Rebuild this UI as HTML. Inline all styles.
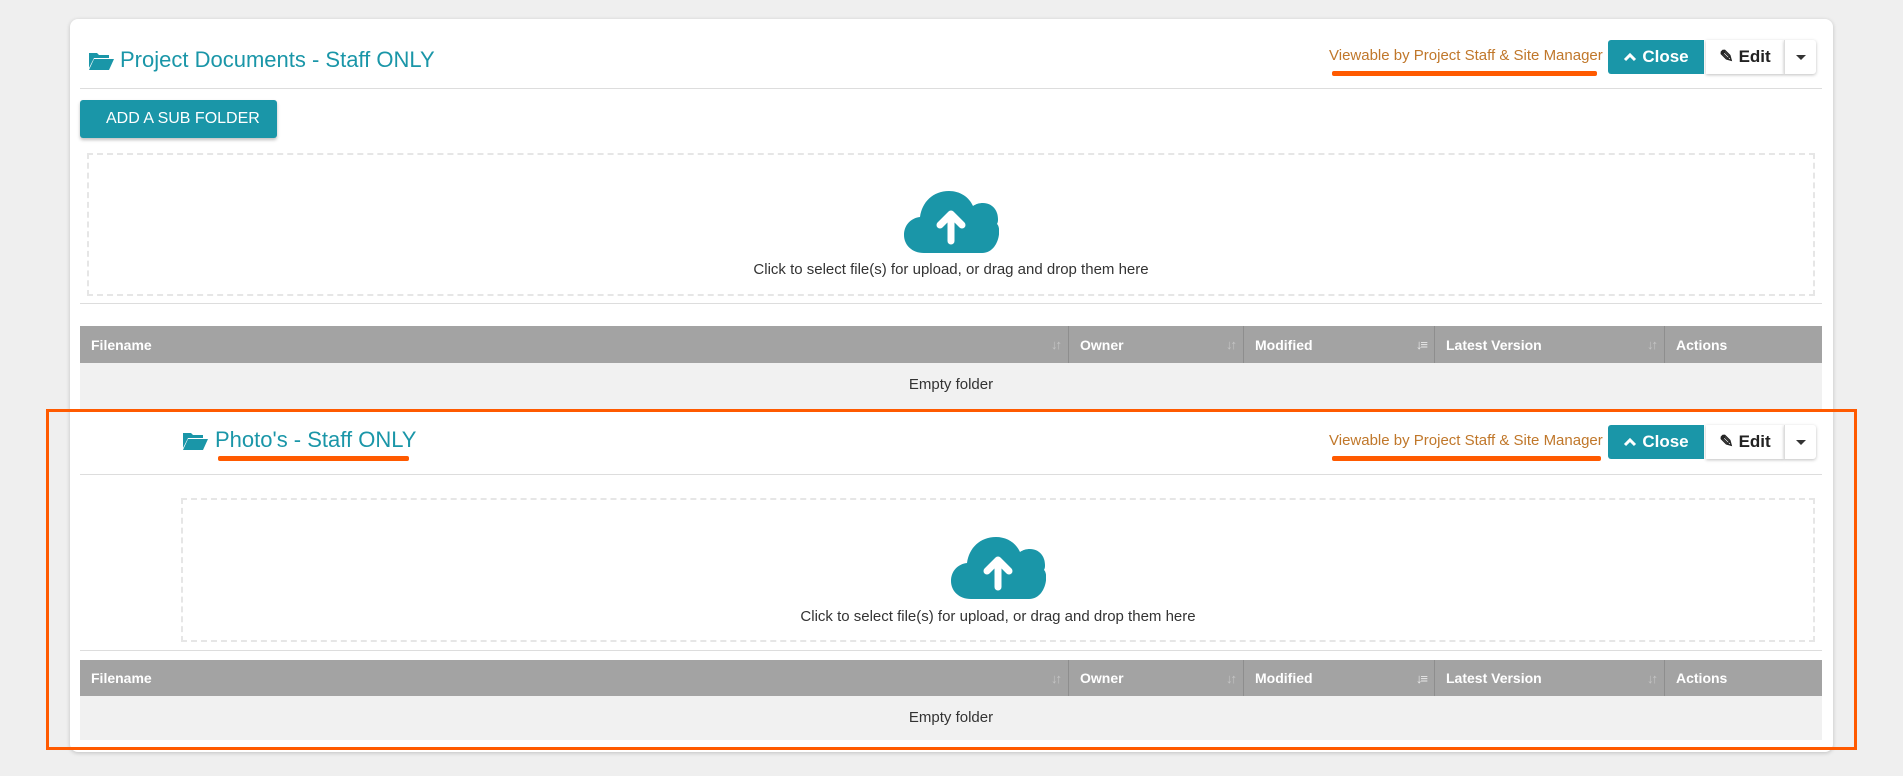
<!DOCTYPE html>
<html><head><meta charset="utf-8"><style>
*{box-sizing:border-box;margin:0;padding:0}
body{width:1903px;height:776px;background:#efefef;font-family:"Liberation Sans",sans-serif;position:relative;overflow:hidden}
.abs{position:absolute}
.card{left:70px;top:19px;width:1763px;height:733px;background:#fff;border-radius:8px;box-shadow:0 1px 4px rgba(0,0,0,.2)}
.title{color:#1a96a8;font-size:22px;white-space:nowrap}
.hr{height:1px;background:#ddd}
.btn{background:#1a96a8;color:#fff;border-radius:3px;box-shadow:0 2px 3px rgba(0,0,0,.25)}
.view{color:#c0772a;font-size:15px;white-space:nowrap}
.ul{background:#ff5a00;height:5px;border-radius:2px}
.close{background:#1a96a8;color:#fff;font-weight:bold;font-size:17px;border-radius:3px 0 0 3px;display:flex;align-items:center;justify-content:center;gap:5px}
.edit{background:#fff;color:#222;font-weight:bold;font-size:17px;display:flex;align-items:center;justify-content:center;gap:5px;box-shadow:0 1px 3px rgba(0,0,0,.25)}
.caret{background:#fff;border-left:1px solid #ddd;border-radius:0 3px 3px 0;box-shadow:0 1px 3px rgba(0,0,0,.25)}
.caret:after{content:"";position:absolute;left:11px;top:15px;border:5px solid transparent;border-top-color:#333;border-bottom:0}
.dz{border:2px dashed #e6e6e6}
.dtext{font-size:15px;color:#333;white-space:nowrap;transform:translateX(-50%)}
.th{background:#a3a3a3;color:#fff;font-weight:bold;font-size:14px}
.th div{position:absolute;top:0;height:100%;display:flex;align-items:center;padding-left:11px;border-left:1px solid #8e8e8e}
.sort{position:absolute;right:8px;color:#c5c5c5;font-size:13px;letter-spacing:-2px}
.er{background:#f1f1f1;font-size:15px;color:#333;text-align:center}
</style></head><body>
<div class="abs card"></div>

<svg class="abs" style="left:88px;top:50px" width="26" height="21" viewBox="0 0 26 21"><path d="M1 3h8l2 2h10v3H6L1 18z" fill="#1a96a8"/><path d="M6 9h20l-5 11H1z" fill="#1a96a8"/></svg>
<div class="abs title" style="left:120px;top:47px">Project Documents - Staff ONLY</div>
<div class="abs view" style="left:1329px;top:47px">Viewable by Project Staff &amp; Site Manager</div>
<div class="abs ul" style="left:1332px;top:71px;width:265px"></div>
<div class="abs close" style="left:1608px;top:40px;width:96px;height:34px"><svg width="14" height="10" viewBox="0 0 14 10"><path d="M2 8l5-5 5 5" stroke="#fff" stroke-width="3" fill="none"/></svg>Close</div>
<div class="abs edit" style="left:1706px;top:40px;width:78px;height:34px"><span>&#9998;</span>Edit</div>
<div class="abs caret" style="left:1784px;top:40px;width:32px;height:34px"></div>
<div class="abs hr" style="left:80px;top:88px;width:1742px"></div>
<div class="abs btn" style="left:80px;top:100px;width:197px;height:38px;font-size:16px;display:flex;align-items:center;padding-left:26px">ADD A SUB FOLDER</div>
<div class="abs dz" style="left:87px;top:153px;width:1728px;height:143px"></div>
<svg class="abs" style="left:904px;top:191px" width="95" height="62" viewBox="0 0 95 62"><path d="M20 62C8 62 0 54 0 44c0-10 7-17 16-18C18 11 29 0 45 0c11 0 20 6 24 15 3-2 6-3 10-3 9 0 15 7 15 16 0 2 0 3-1 5C98 37 95 62 78 62z" fill="#1a96a8"/><path d="M47 50V24M36 34l11-11 11 11" stroke="#fff" stroke-width="7" fill="none" stroke-linecap="round" stroke-linejoin="round"/></svg>
<div class="abs dtext" style="left:951px;top:261px">Click to select file(s) for upload, or drag and drop them here</div>
<div class="abs hr" style="left:80px;top:303px;width:1742px"></div>
<div class="abs th" style="left:80px;top:326px;width:1742px;height:37px">
<div style="left:0;width:988px;border:0">Filename<span class="sort">↓↑</span></div>
<div style="left:988px;width:175px">Owner<span class="sort">↓↑</span></div>
<div style="left:1163px;width:191px">Modified<span class="sort" style="color:#e8e8e8">↓≡</span></div>
<div style="left:1354px;width:230px">Latest Version<span class="sort">↓↑</span></div>
<div style="left:1584px;width:158px">Actions</div>
</div>
<div class="abs er" style="left:80px;top:363px;width:1742px;height:46px;line-height:44px">Empty folder</div>

<div class="abs" style="left:46px;top:409px;width:1811px;height:341px;border:3px solid #ff5a00"></div>
<svg class="abs" style="left:182px;top:430px" width="26" height="21" viewBox="0 0 26 21"><path d="M1 3h8l2 2h10v3H6L1 18z" fill="#1a96a8"/><path d="M6 9h20l-5 11H1z" fill="#1a96a8"/></svg>
<div class="abs title" style="left:215px;top:427px">Photo's - Staff ONLY</div>
<div class="abs ul" style="left:218px;top:456px;width:191px"></div>
<div class="abs view" style="left:1329px;top:432px">Viewable by Project Staff &amp; Site Manager</div>
<div class="abs ul" style="left:1332px;top:456px;width:269px"></div>
<div class="abs close" style="left:1608px;top:425px;width:96px;height:34px"><svg width="14" height="10" viewBox="0 0 14 10"><path d="M2 8l5-5 5 5" stroke="#fff" stroke-width="3" fill="none"/></svg>Close</div>
<div class="abs edit" style="left:1706px;top:425px;width:78px;height:34px"><span>&#9998;</span>Edit</div>
<div class="abs caret" style="left:1784px;top:425px;width:32px;height:34px"></div>
<div class="abs hr" style="left:80px;top:474px;width:1742px"></div>
<div class="abs dz" style="left:181px;top:498px;width:1634px;height:144px"></div>
<svg class="abs" style="left:951px;top:537px" width="95" height="62" viewBox="0 0 95 62"><path d="M20 62C8 62 0 54 0 44c0-10 7-17 16-18C18 11 29 0 45 0c11 0 20 6 24 15 3-2 6-3 10-3 9 0 15 7 15 16 0 2 0 3-1 5C98 37 95 62 78 62z" fill="#1a96a8"/><path d="M47 50V24M36 34l11-11 11 11" stroke="#fff" stroke-width="7" fill="none" stroke-linecap="round" stroke-linejoin="round"/></svg>
<div class="abs dtext" style="left:998px;top:608px">Click to select file(s) for upload, or drag and drop them here</div>
<div class="abs hr" style="left:80px;top:650px;width:1742px"></div>
<div class="abs th" style="left:80px;top:660px;width:1742px;height:36px">
<div style="left:0;width:988px;border:0">Filename<span class="sort">↓↑</span></div>
<div style="left:988px;width:175px">Owner<span class="sort">↓↑</span></div>
<div style="left:1163px;width:191px">Modified<span class="sort" style="color:#e8e8e8">↓≡</span></div>
<div style="left:1354px;width:230px">Latest Version<span class="sort">↓↑</span></div>
<div style="left:1584px;width:158px">Actions</div>
</div>
<div class="abs er" style="left:80px;top:696px;width:1742px;height:44px;line-height:44px">Empty folder</div>
</body></html>
